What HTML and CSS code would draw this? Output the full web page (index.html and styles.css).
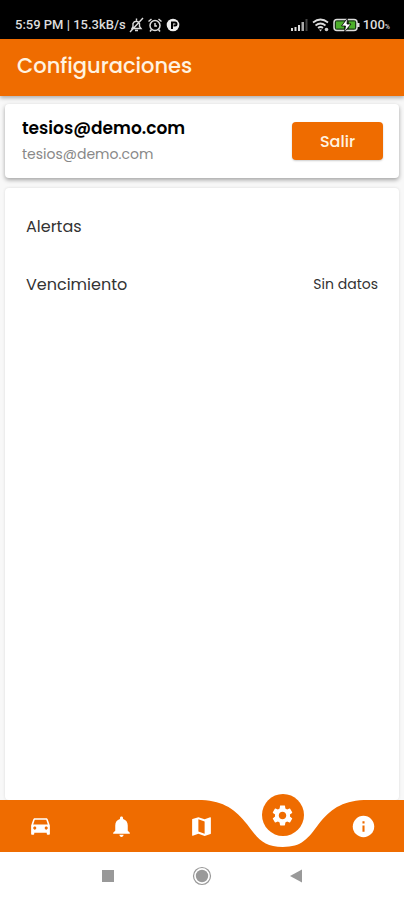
FILE: index.html
```html
<!DOCTYPE html>
<html lang="es">
<head>
    <meta charset="UTF-8">
    <meta name="viewport" content="width=device-width, initial-scale=1.0">
    <title>Configuraciones</title>
    <link rel="stylesheet" href="styles.css">
</head>
<body>

<div class="status-bar">
    <div class="status-group">
        <span>5:59 PM | 15.3kB/s</span>
        <svg width="15" height="16" viewBox="0 0 15 16" fill="none" stroke="#ddd" stroke-width="1.4">
            <path d="M3 11.500h9l-1.500-2V6.500a3.500 3.500 0 0 0-6.500 0v3zM6 13.500h3M7.500 1.500v2M1 15 14 1"/>
        </svg>
        <svg class="icon-alarm" width="16" height="16" viewBox="0 0 16 16" fill="none" stroke="#ddd" stroke-width="1.5">
            <circle cx="8" cy="8.500" r="5"/>
            <path d="M1.500 4.500 4.500 2M14.500 4.500 11.500 2M8 6v3h2M4.500 12.500 3 14.500M11.500 12.500l1.500 2"/>
        </svg>
        <svg class="icon-app" width="14" height="14" viewBox="0 0 14 14">
            <circle cx="7" cy="7" r="6.300" fill="#eee"/>
            <path d="M6 11V4.500h3a1.500 1.500 0 0 1 0 3H7.500" fill="none" stroke="#000" stroke-width="2"/>
        </svg>
    </div>
    <div class="status-group">
        <svg width="19" height="14" viewBox="0 0 19 14">
            <path d="M1 10h2v3H1zM4.500 9h2v4h-2zM8 7h2v6H8z" fill="#ddd"/>
            <path d="M11.500 4h2.500v9h-2.500z" fill="#aaa"/>
            <path d="M15.500 1h2v12h-2z" fill="#444"/>
        </svg>
        <svg class="icon-wifi" width="18" height="14" viewBox="0 0 18 14" fill="none" stroke="#ddd" stroke-width="1.700">
            <path d="M1 4.500Q8.500-1.500 16 4.500M3.500 7.500q5-4 10 0M6 10q2.500-2 5 0"/>
            <path d="M7 11.500 8.500 13.500 10 11.500z" fill="#ddd" stroke="none"/>
            <circle cx="14.500" cy="11.500" r="1.800" fill="#ccc" stroke="none"/>
        </svg>
        <svg class="icon-battery" width="27" height="14" viewBox="0 0 27 14">
            <rect x="1" y="1.500" width="23" height="11" rx="3" fill="#173a10" stroke="#ddd" stroke-width="1.500"/>
            <rect x="3" y="3.500" width="8" height="7" fill="#4caf2a"/>
            <rect x="16" y="3.500" width="6" height="7" fill="#4caf2a"/>
            <rect x="24" y="5" width="2.500" height="4" fill="#ddd"/>
            <path d="M14.500 0 8.500 8h4l-1 6 6.500-8h-4z" fill="#fff" stroke="#000" stroke-width=".8"/>
        </svg>
        <span>100<small>%</small></span>
    </div>
</div>

<header class="app-bar">
    <h1>Configuraciones</h1>
</header>

<main class="content">
    <section class="card user-card">
        <div>
            <div class="user-name">tesios@demo.com</div>
            <div class="user-email">tesios@demo.com</div>
        </div>
        <button class="btn-salir" type="button">Salir</button>
    </section>

    <section class="card options">
        <div class="option">
            <span>Alertas</span>
        </div>
        <div class="option">
            <span>Vencimiento</span>
            <span class="option-value">Sin datos</span>
        </div>
    </section>
</main>

<nav class="bottom-nav">
    <button class="nav-item" type="button" aria-label="Vehículos">
        <svg width="25" height="25" viewBox="0 0 24 24" fill="#fff">
            <path d="M18.920 5.010C18.720 4.420 18.160 4 17.500 4h-11c-.66 0-1.210.42-1.420 1.010L3 11v8c0 .55.45 1 1 1h1c.55 0 1-.45 1-1v-1h12v1c0 .55.45 1 1 1h1c.55 0 1-.45 1-1v-8l-2.080-5.990zM6.500 15c-.83 0-1.500-.67-1.500-1.500S5.670 12 6.500 12s1.500.67 1.500 1.500S7.330 15 6.500 15zm11 0c-.83 0-1.500-.67-1.500-1.500s.67-1.500 1.500-1.500 1.500.67 1.500 1.500-.67 1.500-1.500 1.500zM5 10l1.500-4.500h11L19 10H5z"/>
        </svg>
    </button>
    <button class="nav-item" type="button" aria-label="Notificaciones">
        <svg width="25" height="25" viewBox="0 0 24 24" fill="#fff">
            <path d="M12 22c1.100 0 2-.9 2-2h-4c0 1.100.89 2 2 2zm6-6v-5c0-3.070-1.640-5.640-4.500-6.320V4c0-.83-.67-1.500-1.500-1.500s-1.500.67-1.500 1.500v.68C7.630 5.360 6 7.920 6 11v5l-2 2v1h16v-1l-2-2z"/>
        </svg>
    </button>
    <button class="nav-item" type="button" aria-label="Mapa">
        <svg width="25" height="25" viewBox="0 0 24 24" fill="#fff">
            <path d="M20.500 3l-.16.03L15 5.100 9 3 3.360 4.900c-.21.07-.36.25-.36.48V20.500c0 .28.22.5.5.5l.16-.03L9 18.900l6 2.100 5.640-1.900c.21-.07.36-.25.36-.48V3.500c0-.28-.22-.5-.5-.5zM15 19l-6-2.110V5l6 2.110V19z"/>
        </svg>
    </button>
    <button class="nav-item active" type="button" aria-label="Configuraciones">
        <svg class="notch" viewBox="0 0 162 47" fill="#fff">
            <path d="M0 0C22 1 34 10 45 24C56 39 62 47 81 47C100 47 106 39 117 24C128 10 140 1 162 0Z"/>
        </svg>
        <span class="nav-circle">
            <svg width="25" height="25" viewBox="0 0 24 24" fill="#fff">
                <path d="M19.140 12.940c.04-.3.06-.61.06-.94 0-.32-.02-.64-.07-.94l2.030-1.580c.18-.14.23-.41.12-.61l-1.920-3.320c-.12-.22-.37-.29-.59-.22l-2.390.96c-.5-.38-1.030-.7-1.620-.94l-.36-2.540c-.04-.24-.24-.41-.48-.41h-3.840c-.24 0-.43.17-.47.41l-.36 2.540c-.59.24-1.130.57-1.620.94l-2.390-.96c-.22-.08-.47 0-.59.22L2.740 8.870c-.12.21-.08.47.12.61l2.030 1.580c-.05.3-.09.63-.09.94s.02.64.07.94l-2.030 1.580c-.18.14-.23.41-.12.61l1.920 3.320c.12.22.37.29.59.22l2.390-.96c.5.38 1.030.7 1.620.94l.36 2.540c.05.24.24.41.48.41h3.840c.24 0 .44-.17.47-.41l.36-2.540c.59-.24 1.130-.56 1.620-.94l2.390.96c.22.08.47 0 .59-.22l1.920-3.320c.12-.22.07-.47-.12-.61l-2.010-1.580zM12 15.600c-1.980 0-3.600-1.620-3.600-3.600s1.620-3.600 3.600-3.600 3.600 1.620 3.600 3.600-1.620 3.600-3.600 3.600z"/>
            </svg>
        </span>
    </button>
    <button class="nav-item" type="button" aria-label="Información">
        <svg width="25" height="25" viewBox="0 0 24 24">
            <circle cx="12" cy="12" r="10.300" fill="#fff"/>
            <path d="M11 7h2v2h-2zM11 11h2v6h-2z" fill="#ef6c00"/>
        </svg>
    </button>
</nav>

<div class="system-nav">
    <svg width="20" height="20" viewBox="0 0 20 20">
        <rect x="4" y="4" width="12" height="12" fill="#999"/>
    </svg>
    <svg width="20" height="20" viewBox="0 0 20 20">
        <circle cx="10" cy="10" r="8.500" fill="none" stroke="#999" stroke-width="1.200"/>
        <circle cx="10" cy="10" r="6.200" fill="#999"/>
    </svg>
    <svg width="20" height="20" viewBox="0 0 20 20">
        <path d="M16 3.500v13L4 10z" fill="#999"/>
    </svg>
</div>

</body>
</html>
```
FILE: styles.css
```css
* {
    box-sizing: border-box;
}

body {
    display: flex;
    flex-direction: column;
    min-height: 100vh;
    margin: 0;
    font-family: Poppins, Inter, sans-serif;
    background-color: #fff;
    color: #333;
}

button {
    padding: 0;
    border: none;
    font-family: inherit;
    cursor: pointer;
}

.status-bar {
    display: flex;
    justify-content: space-between;
    align-items: center;
    height: 39px;
    padding: 10px 14px 0 15px;
    background-color: #000;
    color: #ddd;
    font-family: Roboto, sans-serif;
    font-size: 13px;
    font-weight: 500;
}

.status-group {
    display: flex;
    align-items: center;
    gap: 3px;
}

.status-group small {
    font-size: 7px;
}

.app-bar {
    position: relative;
    display: flex;
    align-items: center;
    height: 57px;
    padding: 0 17px 4px;
    background-color: #ef6c00;
    box-shadow: 0 2px 4px rgba(0, 0, 0, 0.3);
}

h1 {
    margin: 0;
    color: #fff3e0;
    font-size: 21px;
    font-weight: 500;
}

.content {
    display: flex;
    flex-direction: column;
    flex: 1;
    gap: 10px;
    padding: 8px 5px 0;
    background-color: #f8f8f8;
}

.card {
    background-color: #fff;
    border-radius: 4px;
}

.user-card {
    display: flex;
    justify-content: space-between;
    align-items: center;
    padding: 11px 16px 11px 17px;
    box-shadow: 0 2px 4px rgba(0, 0, 0, 0.35);
}

.user-name {
    color: #000;
    font-size: 17px;
    font-weight: 600;
    line-height: 26px;
}

.user-email {
    color: #888;
    font-size: 14px;
    line-height: 26px;
}

.btn-salir {
    width: 91px;
    height: 38px;
    border-radius: 4px;
    background-color: #ef6c00;
    color: #fff3e0;
    font-size: 16px;
    font-weight: 500;
    box-shadow: 0 1px 2px rgba(0, 0, 0, 0.2);
}

.options {
    flex: 1;
    padding: 9px 21px 0;
    box-shadow: 0 0 3px rgba(0, 0, 0, 0.12);
}

.option {
    display: flex;
    justify-content: space-between;
    align-items: center;
    height: 58px;
    font-size: 16px;
}

.option-value {
    font-size: 14px;
}

.bottom-nav {
    position: relative;
    display: grid;
    grid-template-columns: repeat(5, 1fr);
    height: 52px;
    background-color: #ef6c00;
}

.nav-item {
    display: flex;
    justify-content: center;
    align-items: center;
    background: none;
}

.nav-item.active {
    position: relative;
}

.notch {
    position: absolute;
    top: 0;
    left: -50%;
    width: 200%;
    height: 47px;
}

/* the selected item floats above the bar */
.nav-circle {
    position: absolute;
    top: -6px;
    display: flex;
    justify-content: center;
    align-items: center;
    width: 42px;
    height: 42px;
    border-radius: 50%;
    background-color: #ef6c00;
}

.system-nav {
    display: flex;
    justify-content: center;
    align-items: center;
    gap: 74px;
    height: 48px;
}
```
